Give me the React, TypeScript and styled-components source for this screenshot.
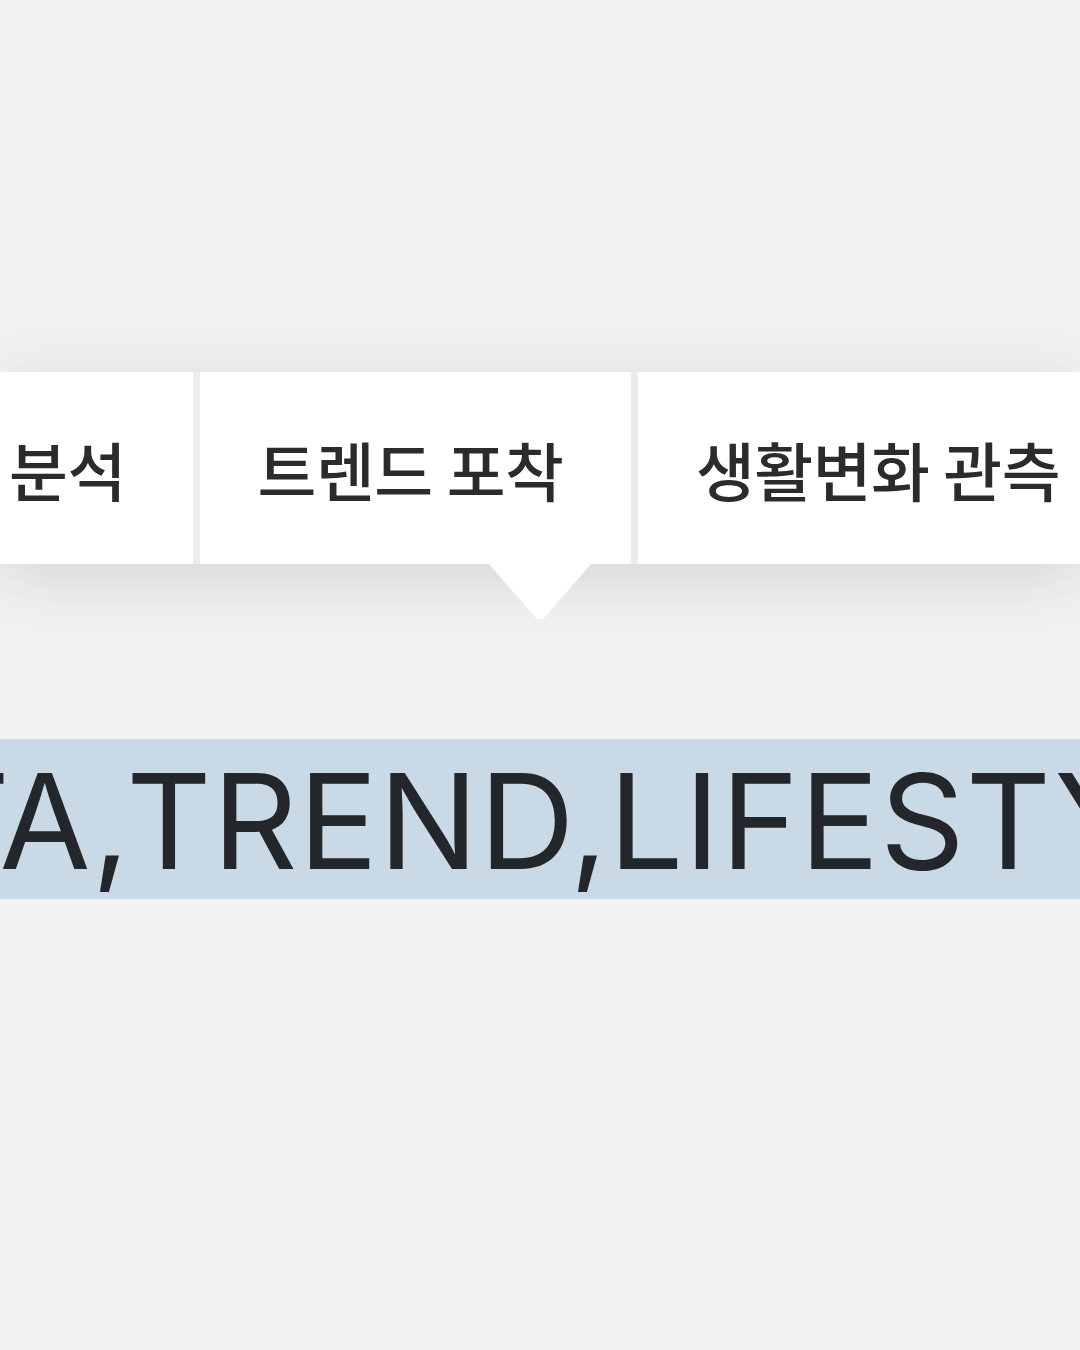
import React from "react";
import styled, { createGlobalStyle } from "styled-components";

const GlobalStyle = createGlobalStyle`
  html, body {
    margin: 0;
    padding: 0;
    background: #f2f2f2;
  }
  body {
    font-family: Inter, "Noto Sans CJK KR", sans-serif;
    overflow: hidden;
  }
`;

interface Tab {
  label: string;
  width: number;
  active?: boolean;
}

const TABS: Tab[] = [
  { label: "분석", width: 251 },
  { label: "트렌드 포착", width: 431, active: true },
  { label: "생활변화 관측", width: 480 },
];

const Page = styled.div`
  width: 1080px;
  height: 1350px;
  overflow: hidden;
  display: flex;
  flex-direction: column;
  padding-top: 372px;
  box-sizing: border-box;
`;

const TabBar = styled.nav`
  position: relative;
  height: 192px;
  background: #ececec;
  box-shadow: 0 26px 56px rgba(0, 0, 0, 0.08), 0 -10px 70px rgba(0, 0, 0, 0.05);
`;

const TabRow = styled.div`
  display: flex;
  gap: 7px;
  height: 100%;
  margin-left: -58px;
`;

const TabItem = styled.div<{ $width: number }>`
  flex: 0 0 ${({ $width }) => $width}px;
  background: #ffffff;
  display: flex;
  align-items: center;
  justify-content: center;
  white-space: nowrap;
`;

const TabLabel = styled.span<{ $active?: boolean }>`
  font-family: "Noto Sans CJK KR", sans-serif;
  font-size: 64px;
  font-weight: 500;
  color: #2a2b2d;
  letter-spacing: -0.5px;
  margin-right: ${({ $active }) => ($active ? 10 : 0)}px;
`;

// the caret sits under the middle of the bar, over its shadow
const Pointer = styled.svg`
  position: absolute;
  left: 50%;
  top: 100%;
  margin-left: -51px;
  width: 102px;
  height: 56px;
  display: block;
`;

const Spacer = styled.div`
  height: 175px;
  flex: none;
`;

const Band = styled.div`
  height: 160px;
  background: #c9d9e5;
  overflow: hidden;
  display: flex;
  align-items: center;
`;

const BandText = styled.span`
  font-family: Inter, "Liberation Sans", sans-serif;
  font-size: 132px;
  font-weight: 400;
  line-height: 1;
  letter-spacing: 1px;
  color: #23272b;
  white-space: nowrap;
  margin-left: -248px;
  margin-top: 4px;
`;

export default function App() {
  return (
    <>
      <GlobalStyle />
      <Page>
        <TabBar>
          <TabRow>
            {TABS.map((tab) => (
              <TabItem key={tab.label} $width={tab.width}>
                <TabLabel $active={tab.active}>{tab.label}</TabLabel>
              </TabItem>
            ))}
          </TabRow>
          <Pointer viewBox="0 0 102 56">
            <path d="M0 0 H102 L56 53 Q51 58 46 53 Z" fill="#ffffff" />
          </Pointer>
        </TabBar>
        <Spacer />
        <Band>
          <BandText>DATA,TREND,LIFESTYLE</BandText>
        </Band>
      </Page>
    </>
  );
}
